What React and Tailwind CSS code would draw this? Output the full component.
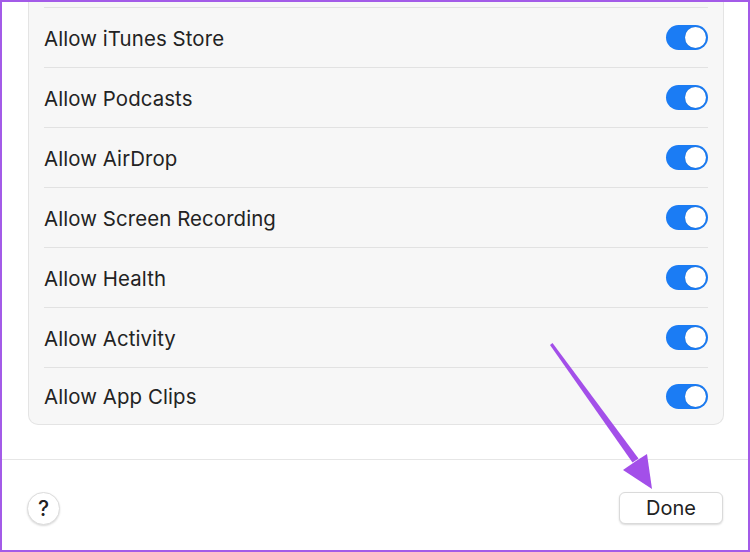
import React from 'react';

const items = [
  'Allow iTunes Store',
  'Allow Podcasts',
  'Allow AirDrop',
  'Allow Screen Recording',
  'Allow Health',
  'Allow Activity',
  'Allow App Clips',
];

const Toggle = () => (
  <div className="w-[42px] h-[25px] rounded-full bg-[#1b7cf4] flex items-center justify-end pr-[2px]">
    <div className="w-[21px] h-[21px] rounded-full bg-white shadow-[0_0_1px_rgba(0,0,0,0.3)]"></div>
  </div>
);

export default function App() {
  return (
    <div className="relative w-[750px] h-[552px] bg-white border-2 border-[#a35be8] overflow-hidden flex flex-col" style={{ fontFamily: 'Inter, "Noto Sans", sans-serif' }}>
      {/* Settings list */}
      <div className="ml-[26px] w-[696px] pt-[5px] bg-[#f7f7f7] border border-t-0 border-[#e4e4e4] rounded-b-[10px] px-[15px]">
        {items.map((label, i) => (
          <div
            key={label}
            className={`flex items-center justify-between border-t border-[#e2e2e2] ${i === items.length - 1 ? 'h-[57px]' : 'h-[60px]'}`}
          >
            <span className="text-[20.4px] leading-[28px] mt-[2px] text-[#232323] tracking-[0.1px]">{label}</span>
            <Toggle />
          </div>
        ))}
      </div>

      {/* Footer */}
      <div className="mt-[34px] border-t border-[#e6e6e6] flex items-start justify-between px-[25px] pt-[32px]">
        <button className="w-[33px] h-[33px] rounded-full bg-white border border-[#dcdcdc] shadow-[0_1px_2px_rgba(0,0,0,0.15)] flex items-center justify-center text-[21px] font-medium text-[#222]">
          ?
        </button>
        <button className="w-[104px] h-[32px] rounded-[6px] bg-white border border-[#dadada] shadow-[0_1px_2px_rgba(0,0,0,0.15)] text-[20px] text-[#222] flex items-center justify-center">
          Done
        </button>
      </div>

      {/* Annotation arrow */}
      <svg className="absolute left-0 top-0 pointer-events-none" width="750" height="552" viewBox="0 0 750 552">
        <polygon points="548,343 550.5,341 636.5,456.5 630.5,460.5" fill="#a34fe9" />
        <polygon points="650,487 621,468 634,459 645,452" fill="#a34fe9" />
      </svg>
    </div>
  );
}
